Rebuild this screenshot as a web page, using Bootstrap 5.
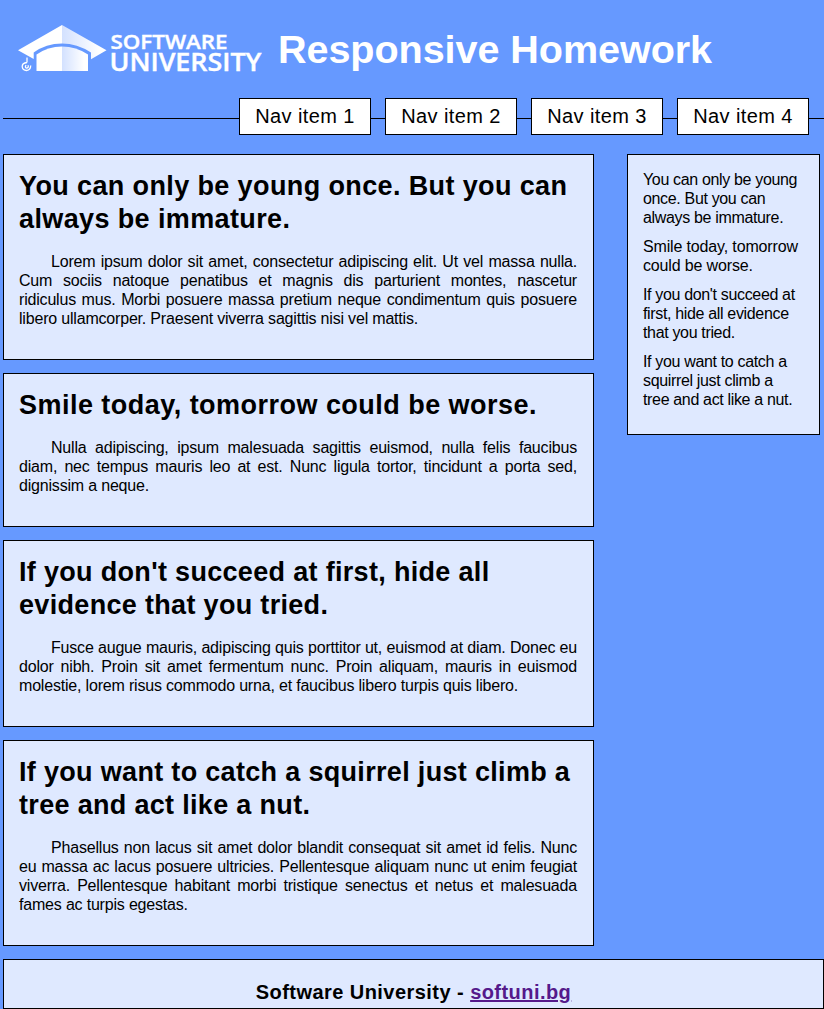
<!DOCTYPE html>
<html lang="en">
<head>
<meta charset="utf-8">
<meta name="viewport" content="width=device-width, initial-scale=1">
<title>Responsive Homework</title>
<link href="https://cdn.jsdelivr.net/npm/bootstrap@5.3.0/dist/css/bootstrap.min.css" rel="stylesheet">
<style>
body { background: #69f; color: #000; font-family: "Liberation Sans", Arial, sans-serif; font-size: 16px; line-height: 19px; overflow: hidden; }
.page { padding-left: 3px; height: 1009px; }
.top { height: 98px; padding-left: 12px; }
.logo { width: 255px; height: 60px; margin-top: 18px; }
.top h1 { font-size: 39.6px; line-height: 46px; font-weight: 700; letter-spacing: -.08px; margin: 26px 0 0 8px; }
.site-nav { height: 37px; gap: 14px; padding-right: 15px; margin-bottom: 19px; background: linear-gradient(#000, #000) 0 20px / 100% 1px no-repeat; }
.site-nav a { width: 132px; height: 37px; font-size: 20px; line-height: 34px; letter-spacing: .4px; background: #fff; border: 1px solid #000; color: #000; text-align: center; text-decoration: none; }
.panel { background: #dfe9ff; border: 1px solid #000; padding: 15px; }
.articles { width: 591px; gap: 13px; }
.articles .panel { padding-right: 16px; }
.panel h2 { font-size: 27px; line-height: 33px; font-weight: 700; letter-spacing: .38px; margin: 0 -10px 16px 0; }
.panel h2.loose { letter-spacing: .47px; }
.panel h2.snug { letter-spacing: .32px; }
.panel p { text-indent: 32px; letter-spacing: -.19px; margin: 0 0 16px; }
.panel p span { display: block; text-align: justify; text-align-last: justify; }
.panel p span + span { text-indent: 0; }
.panel p span:last-child { text-align-last: left; }
.side { width: 193px; margin-right: 4px; }
.side li { margin-bottom: 10px; white-space: nowrap; letter-spacing: -.34px; }
.side li:nth-child(2) { letter-spacing: -.15px; }
.foot { height: 50px; margin-top: 13px; font-size: 20px; line-height: 24px; letter-spacing: .45px; font-weight: 700; padding: 20px 0 0; }
.foot a { color: #551a8b; }
</style>
</head>
<body>
<div class="page d-flex flex-column">
  <header class="top d-flex align-items-start flex-shrink-0">
    <svg class="logo flex-shrink-0" viewBox="15 18 255 60" role="img" aria-label="Software University">
      <defs><linearGradient id="shade"><stop offset="0" stop-color="#d3e1ff"/><stop offset=".85" stop-color="#fff"/></linearGradient></defs>
      <path d="M18 50.300 62 25V43.500Q46 43.500 33.700 52.500V59Z" fill="#fff"/>
      <path d="M62 25 106.500 50.300 91 59.200V52.500Q77 43.500 62 43.500Z" fill="url(#shade)"/>
      <path d="M36.500 71V54.500Q48 46.500 62 46.500V71Z" fill="#fff"/>
      <path d="M62 46.500Q76 46.500 88 54.500V71H62Z" fill="url(#shade)"/>
      <path d="M27 57.500V62.500M27 62.500Q22 63 22.200 66.700 22.700 70.500 26.500 70.500 30.700 70 30.700 65.500M26 65Q24.500 67.800 26.700 68.200 29 67.500 28 65.300" fill="none" stroke="#fff" stroke-width="1.300"/>
      <g fill="#fff" stroke="#fff" stroke-width=".4" font-family="Open Sans, sans-serif" font-weight="600">
        <text x="110.500" y="49" font-size="19.500" textLength="117" lengthAdjust="spacingAndGlyphs">SOFTWARE</text>
        <text x="109.500" y="70.700" font-size="24.500" textLength="152" lengthAdjust="spacingAndGlyphs">UNIVERSITY</text>
      </g>
    </svg>
    <h1 class="text-white text-nowrap">Responsive Homework</h1>
  </header>
  <nav class="site-nav d-flex justify-content-end flex-shrink-0">
    <a href="#">Nav item 1</a>
    <a href="#">Nav item 2</a>
    <a href="#">Nav item 3</a>
    <a href="#">Nav item 4</a>
  </nav>
  <div class="d-flex justify-content-between align-items-start flex-shrink-0">
    <main class="articles d-flex flex-column">
      <article class="panel">
        <h2>You can only be young once. But you can<br>always be immature.</h2>
        <p><span>Lorem ipsum dolor sit amet, consectetur adipiscing elit. Ut vel massa nulla.</span>
        <span>Cum sociis natoque penatibus et magnis dis parturient montes, nascetur</span>
        <span>ridiculus mus. Morbi posuere massa pretium neque condimentum quis posuere</span>
        <span>libero ullamcorper. Praesent viverra sagittis nisi vel mattis.</span></p>
      </article>
      <article class="panel">
        <h2 class="loose">Smile today, tomorrow could be worse.</h2>
        <p><span>Nulla adipiscing, ipsum malesuada sagittis euismod, nulla felis faucibus</span>
        <span>diam, nec tempus mauris leo at est. Nunc ligula tortor, tincidunt a porta sed,</span>
        <span>dignissim a neque.</span></p>
      </article>
      <article class="panel">
        <h2 class="snug">If you don't succeed at first, hide all<br>evidence that you tried.</h2>
        <p><span>Fusce augue mauris, adipiscing quis porttitor ut, euismod at diam. Donec eu</span>
        <span>dolor nibh. Proin sit amet fermentum nunc. Proin aliquam, mauris in euismod</span>
        <span>molestie, lorem risus commodo urna, et faucibus libero turpis quis libero.</span></p>
      </article>
      <article class="panel">
        <h2 class="snug">If you want to catch a squirrel just climb a<br>tree and act like a nut.</h2>
        <p><span>Phasellus non lacus sit amet dolor blandit consequat sit amet id felis. Nunc</span>
        <span>eu massa ac lacus posuere ultricies. Pellentesque aliquam nunc ut enim feugiat</span>
        <span>viverra. Pellentesque habitant morbi tristique senectus et netus et malesuada</span>
        <span>fames ac turpis egestas.</span></p>
      </article>
    </main>
    <aside class="panel side">
      <ul class="list-unstyled mb-0">
        <li>You can only be young<br>once. But you can<br>always be immature.</li>
        <li>Smile today, tomorrow<br>could be worse.</li>
        <li>If you don't succeed at<br>first, hide all evidence<br>that you tried.</li>
        <li>If you want to catch a<br>squirrel just climb a<br>tree and act like a nut.</li>
      </ul>
    </aside>
  </div>
  <footer class="panel foot text-center flex-shrink-0">Software University - <a href="#">softuni.bg</a></footer>
</div>
<script src="https://cdn.jsdelivr.net/npm/bootstrap@5.3.0/dist/js/bootstrap.bundle.min.js"></script>
</body>
</html>
